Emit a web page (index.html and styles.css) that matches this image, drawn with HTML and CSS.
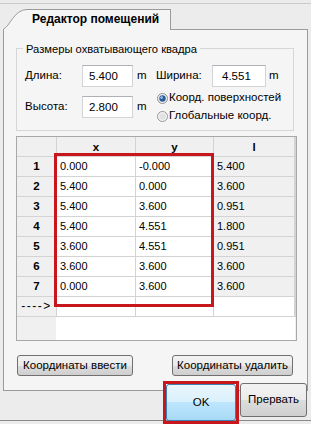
FILE: index.html
```html
<!DOCTYPE html>
<html>
<head>
<meta charset="utf-8">
<title>Редактор помещений</title>
<link rel="stylesheet" href="styles.css">
</head>
<body>
<div class="window">
  <div class="tabstrip">
    <div class="tab">
      <svg class="tab-curve" width="24" height="21" viewBox="0 0 24 21">
        <path class="curve-fill" d="M0 21 L0 20 C6 18 11 0.5 24 0.5 L24 21 Z"/>
        <path class="curve-line" d="M0.5 21 L0.5 20 C6.5 18 11 0.5 24 0.5"/>
      </svg>
      <span class="tab-label">Редактор помещений</span>
    </div>
  </div>
  <div class="panel">
    <fieldset class="group">
      <legend class="group-title">Размеры охватывающего квадра</legend>
      <div class="dims">
        <span class="lbl">Длина:</span><span class="field">5.400</span><span class="unit">m</span>
        <span class="lbl">Ширина:</span><span class="field field-r">4.551</span><span class="unit unit-r">m</span>
        <span class="lbl">Высота:</span><span class="field">2.800</span><span class="unit">m</span>
        <div class="radios">
          <div class="radio">
            <svg class="rb" width="11" height="11" viewBox="0 0 11 11"><circle cx="5.5" cy="5.5" r="5" fill="#f2f2f2" stroke="#8f8f8f"/><circle cx="5.5" cy="5.5" r="3.2" fill="#2b5b98"/><circle cx="4.6" cy="4.6" r="1.3" fill="#9cc8ee"/></svg>
            <span>Коорд. поверхностей</span>
          </div>
          <div class="radio">
            <svg class="rb" width="11" height="11" viewBox="0 0 11 11"><circle cx="5.5" cy="5.5" r="5" fill="#f6f6f6" stroke="#969696"/><circle cx="5.5" cy="5.5" r="3.3" fill="#e1e1e1"/></svg>
            <span>Глобальные коорд.</span>
          </div>
        </div>
      </div>
    </fieldset>
    <div class="sheet">
      <div class="grid">
        <div class="c hd"></div><div class="c hd">x</div><div class="c hd">y</div><div class="c hd">l</div>
        <div class="c rh">1</div><div class="c">0.000</div><div class="c">-0.000</div><div class="c ro">5.400</div>
        <div class="c rh">2</div><div class="c">5.400</div><div class="c">0.000</div><div class="c ro">3.600</div>
        <div class="c rh">3</div><div class="c">5.400</div><div class="c">3.600</div><div class="c ro">0.951</div>
        <div class="c rh">4</div><div class="c">5.400</div><div class="c">4.551</div><div class="c ro">1.800</div>
        <div class="c rh">5</div><div class="c">3.600</div><div class="c">4.551</div><div class="c ro">0.951</div>
        <div class="c rh">6</div><div class="c">3.600</div><div class="c">3.600</div><div class="c ro">3.600</div>
        <div class="c rh">7</div><div class="c">0.000</div><div class="c">3.600</div><div class="c ro">3.600</div>
        <div class="c rh arrow">----&gt;</div><div class="c"></div><div class="c"></div><div class="c"></div>
      </div>
      <div class="mark"></div>
    </div>
    <div class="actions">
      <button class="btn btn-in">Координаты ввести</button>
      <button class="btn btn-del">Координаты удалить</button>
    </div>
  </div>
  <div class="footer">
    <div class="ok-frame"><button class="btn btn-ok">OK</button></div>
    <button class="btn btn-cancel">Прервать</button>
  </div>
</div>
</body>
</html>
```

FILE: styles.css
```css
* { box-sizing: border-box; }

body {
  margin: 0;
  width: 311px;
  height: 424px;
  overflow: hidden;
  background: #ececec;
  color: #000;
  font: 11.5px/1 "Liberation Sans", Arial, sans-serif;
}

.window {
  width: 311px;
  height: 424px;
}

.tabstrip {
  margin-top: 3px;
  border-top: 1px solid #cacaca;
  padding: 5px 0 0 3px;
}

.tab {
  display: flex;
  width: fit-content;
  height: 21px;
  margin-bottom: -1px;
  position: relative;
  z-index: 1;
}

.tab-curve { display: block; flex: none; }
.curve-fill { fill: #f5f5f5; }
.curve-line { fill: none; stroke: #9a9a9a; stroke-width: 1; }

.tab-label {
  display: block;
  height: 21px;
  border-top: 1px solid #9a9a9a;
  border-right: 1px solid #9a9a9a;
  background: #f5f5f5;
  padding: 0 11px 2px 5px;
  font-size: 12px;
  font-weight: bold;
  line-height: 18px;
  white-space: nowrap;
}

.panel {
  margin: 0 3px;
  border: 1px solid #9a9a9a;
  background: #f5f5f5;
  padding: 0 0 14px 12px;
}

.group {
  margin: 10px 0 0 0;
  width: 278px;
  min-width: 0;
  padding: 0 0 12px 8px;
  border: 1px solid #d6d6d6;
}

.group-title {
  margin-left: -2px;
  padding: 2px 3px 0;
  line-height: 14px;
  font-size: 11.2px;
}

.dims {
  display: grid;
  grid-template-columns: 57px 51px 23px 56px 54px auto;
  grid-template-rows: 22px 22px;
  row-gap: 9px;
  align-items: center;
  padding-top: 9px;
}

.lbl { white-space: nowrap; }

.field {
  height: 22px;
  background: #fff;
  border: 1px solid #d2d4d8;
  border-top-color: #aeb0b5;
  padding-left: 6px;
  line-height: 20px;
}
.field-r { padding-left: 9px; }

.unit { padding-left: 4px; }
.unit-r { padding-left: 3px; }

.radios {
  grid-column: 4 / span 3;
  align-self: center;
  display: flex;
  flex-direction: column;
  padding-left: 1px;
}

.radio {
  display: flex;
  align-items: center;
  gap: 1px;
  height: 18px;
  white-space: nowrap;
}
.rb { display: block; flex: none; }

.sheet {
  position: relative;
  margin-top: 5px;
  width: 281px;
  height: 205px;
  border: 1px solid #a8a8a8;
  background: linear-gradient(to right, #f0f0f0 0 39px, #fff 39px 278px, #f0f0f0 278px);
}

.grid {
  display: grid;
  grid-template-columns: 39px 78px 77px 80px;
  grid-auto-rows: 19px;
  gap: 1px;
  width: 279px;
  background: #d3d3d3;
  border-right: 1px solid #d3d3d3;
  border-bottom: 1px solid #d3d3d3;
}

.c {
  background: #fff;
  padding-left: 3px;
  font-size: 11px;
  line-height: 19px;
  white-space: nowrap;
}

.hd, .rh {
  background: #f0f0f0;
  font-weight: bold;
  text-align: center;
  padding-left: 0;
  font-size: 11.5px;
}

.hd { line-height: 21px; }

.ro { background: #f0f0f0; }

.arrow {
  font-weight: normal;
  letter-spacing: 1.5px;
  font-size: 12px;
}

.mark {
  position: absolute;
  left: 37px;
  top: 16px;
  width: 160px;
  height: 154px;
  border: 3px solid #c8161d;
}

.actions {
  display: flex;
  justify-content: space-between;
  width: 276px;
  margin: 14px 0 0 1px;
}

.btn {
  font: inherit;
  color: #000;
  border: 1px solid #707070;
  border-radius: 3px;
  background: linear-gradient(#f2f2f2 0%, #ebebeb 50%, #dddddd 50%, #cfcfcf 100%);
  padding: 0;
  height: 21px;
  white-space: nowrap;
}

.btn-in { width: 116px; }
.btn-del { width: 121px; }

.footer {
  display: flex;
  justify-content: flex-end;
  align-items: flex-start;
  gap: 1px;
  margin-top: -10px;
  height: 40px;
  padding-right: 4px;
  border-bottom: 1px solid #8a8a8a;
}

.ok-frame {
  flex: none;
  width: 76px;
  height: 43px;
  border: 3px solid #c8161d;
}

.btn-ok {
  display: block;
  width: 100%;
  height: 100%;
  border-color: #3c7fb1;
  background: linear-gradient(#eaf6fd 0%, #d9f0fc 50%, #bee6fd 50%, #a7d9f5 100%);
}

.btn-cancel {
  flex: none;
  width: 67px;
  height: 34px;
  margin-top: 2px;
}
```
